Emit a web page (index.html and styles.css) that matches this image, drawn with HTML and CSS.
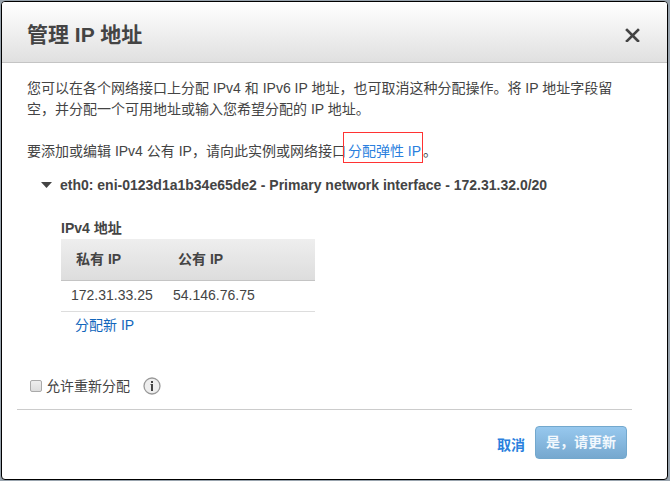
FILE: index.html
```html
<!DOCTYPE html>
<html lang="zh-CN">
<head>
<meta charset="utf-8">
<title>管理 IP 地址</title>
<link rel="stylesheet" href="styles.css">
</head>
<body>

<div class="dialog" role="dialog" aria-labelledby="dialog-title">

    <div class="dialog-header">
        <h1 id="dialog-title">管理 IP 地址</h1>
        <button class="close" type="button" aria-label="关闭">
            <svg width="15" height="15" viewBox="0 0 15 15"><path d="M2 3 L13 14 M13 3 L2 14" fill="none" stroke="#444" stroke-width="2.6" stroke-linecap="square"/></svg>
        </button>
    </div>

    <div class="dialog-body">
        <p>您可以在各个网络接口上分配 IPv4 和 IPv6 IP 地址，也可取消这种分配操作。将 IP 地址字段留空，并分配一个可用地址或输入您希望分配的 IP 地址。</p>
        <p>要添加或编辑 IPv4 公有 IP，请向此实例或网络接口<a class="marked" href="#">分配弹性 IP</a>。</p>

        <button class="toggle" type="button" aria-expanded="true">
            <svg width="11" height="8" viewBox="0 0 11 8"><path d="M0 0 H11 L5.5 6 Z" fill="#444"/></svg>
            eth0: eni-0123d1a1b34e65de2 - Primary network interface - 172.31.32.0/20
        </button>

        <div class="interface">
            <h2>IPv4 地址</h2>
            <table>
                <thead>
                    <tr><th>私有 IP</th><th>公有 IP</th></tr>
                </thead>
                <tbody>
                    <tr><td>172.31.33.25</td><td>54.146.76.75</td></tr>
                </tbody>
            </table>
            <a class="assign" href="#">分配新 IP</a>
        </div>

        <div class="reassign">
            <input type="checkbox" id="allow-reassign">
            <label for="allow-reassign">允许重新分配</label>
            <svg class="info" width="18" height="18" viewBox="0 0 18 18">
                <circle cx="9" cy="9" r="8" fill="#eee" stroke="#999" stroke-width="1.3"/>
                <path d="M8 4 H10 V6 H8 Z M7.5 7 H10 V14 H8 V8 H7.5 Z" fill="#444"/>
            </svg>
        </div>
    </div>

    <div class="dialog-footer">
        <button class="cancel" type="button">取消</button>
        <button class="primary" type="button">是，请更新</button>
    </div>

</div>

</body>
</html>
```
FILE: styles.css
```css
* { box-sizing: border-box; }
body { margin: 0; padding: 1px 2px 1px 1px; min-height: 100vh; display: flex; background: #98a3ad; color: #444; font: 14px/21px "Liberation Sans", "Noto Sans CJK SC", sans-serif; }
button { padding: 0; border: none; background: none; color: inherit; font: inherit; cursor: pointer; }
a { color: #2a7fde; text-decoration: none; }
svg { display: block; }

.dialog { flex: 1; display: flex; flex-direction: column; border: 1px solid #000; border-radius: 4px; background: #fff; overflow: hidden; }
.dialog-header { display: flex; align-items: center; justify-content: space-between; height: 61px; padding: 5px 27px 0 25px; border-bottom: 1px solid #c4c4c4; background: linear-gradient(#fff, #e0e0e0); }
.dialog-header h1 { margin: 0; font-size: 21px; line-height: 28px; }

.dialog-body { padding: 15px 50px 0 25px; }
.dialog-body p { margin: 0 0 21px; }
.marked { margin: 0 0 0 -3px; padding: 10px 1px 3px 4px; border: 1px solid #f33; }

.toggle { display: flex; align-items: center; gap: 8px; margin: -8px 0 0 14px; font-weight: bold; text-align: left; }

.interface { margin: 21px 0 0 34px; }
.interface h2 { margin: 0; font-size: 14px; line-height: 22px; }
table { width: 254px; border-collapse: collapse; table-layout: fixed; }
th { height: 41px; padding: 0 15px; border-bottom: 1px solid #c4c4c4; text-align: left; }
th:first-child, td:first-child { width: 102px; }
thead tr { background: linear-gradient(#eee, #ddd); }
td { height: 31px; padding: 0 10px; border-bottom: 1px solid #ddd; }
.assign { display: inline-block; margin: 3px 0 0 14px; color: #1166bb; }

.reassign { display: flex; align-items: center; margin: 40px 0 0 3px; }
.reassign input { appearance: none; width: 12px; height: 12px; margin: 0 4px 0 0; border: 1px solid #aaa; border-radius: 2px; background: linear-gradient(#eee, #ddd); }
.reassign input:checked { background: #2a7fde; }
.info { margin-left: 13px; }

.dialog-footer { display: flex; justify-content: flex-end; align-items: center; gap: 10px; margin: 12px 35px 0 15px; padding: 16px 5px 0 0; border-top: 1px solid #ccc; }
.cancel { padding-top: 6px; color: #2a7fde; font-weight: bold; }
.primary { height: 33px; padding: 0 10px; border: 1px solid #73a8cd; border-radius: 4px; background: linear-gradient(#97c8ee, #76a8cf); color: #f2f8fd; font-weight: bold; }
```
